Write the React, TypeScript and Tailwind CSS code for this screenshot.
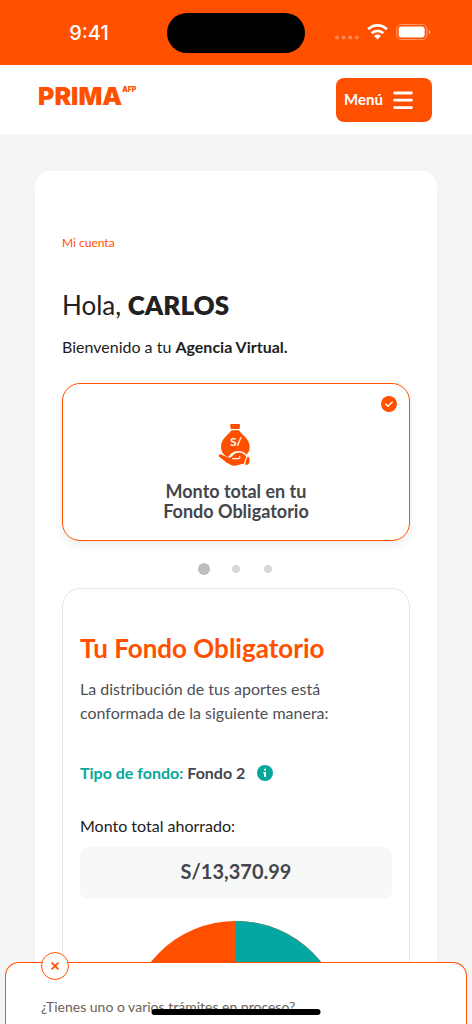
const slides = [
  { id: "obligatorio", label: "Fondo Obligatorio", active: true },
  { id: "voluntario", label: "Fondo Voluntario", active: false },
  { id: "total", label: "Total", active: false },
];

function StatusBar() {
  return (
    <div className="grid h-[65px] grid-cols-[1fr_138px_1fr] items-center bg-[#ff5000] font-['Inter',sans-serif] text-white">
      <span className="pl-[11px] text-center text-xl font-medium">9:41</span>
      <div className="h-10 rounded-full bg-black" />
      <svg className="ml-[29px]" width="98" height="20" viewBox="0 0 98 20" fill="none" aria-hidden="true">
        <g fill="#fff" fillOpacity="0.3">
          <circle cx="3" cy="14.5" r="2.1" />
          <circle cx="9.6" cy="14.5" r="2.1" />
          <circle cx="16.2" cy="14.5" r="2.1" />
          <circle cx="22.8" cy="14.5" r="2.1" />
        </g>
        <g stroke="#fff" strokeWidth="2.8">
          <path d="M34.2 6.300a13.200 13.200 0 0 1 18.600 0" />
          <path d="M37.700 10.200a8.300 8.300 0 0 1 11.600 0" />
        </g>
        <path d="M43.500 16.400l-3.400-3.500a4.900 4.900 0 0 1 6.800 0z" fill="#fff" />
        <rect x="62.700" y="1.500" width="30" height="15" rx="4.600" stroke="#fff" strokeOpacity="0.4" strokeWidth="1.100" />
        <rect x="64.700" y="3.500" width="26" height="11" rx="3" fill="#fff" />
        <path d="M94.700 6.700c2.200.8 2.200 3.800 0 4.600z" fill="#fff" fillOpacity="0.5" />
      </svg>
    </div>
  );
}

function Header() {
  return (
    <header className="flex h-[69px] items-center justify-between bg-white pr-10 pl-[38px]">
      <a href="#inicio" aria-label="Prima AFP" className="flex items-start pb-2 font-['Inter',sans-serif] font-black text-[#ff5000]">
        <span className="text-[25px] leading-6">PRIMA</span>
        <span className="text-[7px] leading-3">AFP</span>
      </a>
      <button type="button" className="flex h-11 w-24 items-center gap-2.5 rounded-lg bg-[#ff5000] pl-2 text-[15px] font-bold text-white">
        Menú
        <svg width="20" height="20" viewBox="0 0 20 20" stroke="#fff" strokeWidth="2.8" strokeLinecap="round" aria-hidden="true">
          <path d="M1.6 3h16.8M1.6 10.2h16.8M1.6 17.6h16.8" />
        </svg>
      </button>
    </header>
  );
}

function MoneyBag() {
  return (
    <svg width="36" height="44" viewBox="-1 0 36 44" aria-hidden="true">
      <path
        fill="#ff5000"
        d="M12.300 1h7.600q1.500 0 1.200 1.500l-.7 3.500h-8.600l-.7-3.500Q10.800 1 12.300 1zM12.400 7.200h7.400c3.200 4.600 10.900 8.700 10.900 16.500 0 3.200-1.200 6-3.200 8-1.700-2.300-4.600-3.600-8-3.600-3.700 0-6.800 1.400-8.800 4.200-.7 1-1.200 1.600-2.200 1.700C4.500 32 2 28.500 2 23.700c0-7.800 7.200-11.900 10.400-16.500z"
      />
      <text x="17" y="23" textAnchor="middle" fontFamily="Lato, sans-serif" fontSize="12" fontWeight="700" fill="#fff">
        S/
      </text>
      <path
        fill="#ff5000"
        d="M-.2 33.600c-.5-1.700.9-2.800 2.400-2.100l6.200 2.800c2 .7 3.700.2 4.900-1.300 2.500-3.200 6.900-4.500 11-2.300 1.500.9 2.500 2 3.100 3.300-1.300 2.100-2 4.300-2.100 6.600-1.500.5-3 .7-4.500.9-2.400.5-3.600 1.500-6.100 1.300C9.900 42.200 5.200 37.700-.2 33.600z"
      />
      <path
        d="M13.600 35.600h5.700c1.600-.1 2.200-1.300 1.200-2.100"
        fill="none"
        stroke="#fff"
        strokeWidth="1.100"
        strokeLinecap="round"
      />
      <path fill="#ff5000" d="M28.500 33.900l1-.2c1.400 1.600 1.400 4.900.2 7-.5.8-1.500 1.200-3.400 1.200.1-3.100.7-5.600 2.200-8z" />
    </svg>
  );
}

function FundPie() {
  return (
    <svg className="mx-auto mt-[22px] size-[218px]" viewBox="0 0 218 218" role="img" aria-label="Distribución del fondo">
      <circle cx="109" cy="109" r="109" fill="#ff5000" />
      <path d="M108.500 0h.5a109 109 0 0 1 0 218h-.5z" fill="#05a7a2" />
    </svg>
  );
}

function Notice() {
  return (
    <aside className="fixed inset-x-[5px] bottom-0 h-[62px] rounded-t-[14px] border border-b-0 border-[#ff5000] bg-white px-[35px] pt-8">
      <button
        type="button"
        aria-label="Cerrar"
        className="absolute -top-[11px] left-[35px] flex size-7 items-center justify-center rounded-full border border-[#ff5000] bg-white"
      >
        <svg width="8" height="8" viewBox="0 0 8 8" stroke="#ff5000" strokeWidth="1.700" aria-hidden="true">
          <path d="M.6.6l6.800 6.800M7.400.6L.6 7.400" />
        </svg>
      </button>
      <p className="text-sm leading-6 text-[#6b6259]">¿Tienes uno o varios trámites en proceso?</p>
      <div className="absolute bottom-[9px] left-1/2 h-[6px] w-[169px] -translate-x-1/2 rounded-full bg-black" />
    </aside>
  );
}

export default function App() {
  return (
    <div className="flex h-screen flex-col bg-[#f5f5f5] font-['Lato',sans-serif] text-[#212121]">
      <StatusBar />
      <Header />
      <main className="min-h-0 flex-1 overflow-y-auto px-[35px] pt-[37px] [scrollbar-width:none]">
        <div className="rounded-2xl bg-white px-[27px] pt-16 pb-24 shadow-[0_0_16px_rgba(0,0,0,0.02)]">
          <a href="#mi-cuenta" className="block text-xs leading-4 text-[#ff5000]">
            Mi cuenta
          </a>
          <h1 className="mt-[38px] text-[26px] leading-8">
            Hola, <strong className="font-extrabold">CARLOS</strong>
          </h1>
          <p className="mt-3.5 text-base leading-6">
            Bienvenido a tu <strong className="font-bold">Agencia Virtual.</strong>
          </p>

          <button
            type="button"
            aria-pressed="true"
            className="relative mt-6 flex h-[158px] w-full flex-col items-center rounded-[18px] border border-[#ff5000] bg-white pt-[39px] shadow-[0_4px_10px_rgba(0,0,0,0.08)]"
          >
            <svg className="absolute top-3 right-3" width="16" height="16" viewBox="0 0 16 16" aria-hidden="true">
              <circle cx="8" cy="8" r="8" fill="#ff5000" />
              <path d="M4.700 8.100l2.200 2.200 4.300-4.400" fill="none" stroke="#fff" strokeWidth="1.400" strokeLinecap="round" />
            </svg>
            <MoneyBag />
            <span className="mt-3.5 text-lg leading-5 font-bold text-[#45464b]">
              Monto total en tu
              <br />
              Fondo Obligatorio
            </span>
          </button>

          <div className="mt-5 flex items-center justify-center gap-4">
            {slides.map((s) => (
              <button key={s.id} type="button" aria-label={s.label} className="flex size-4 items-center justify-center">
                <span className={s.active ? "size-3 rounded-full bg-[#bdbdbd]" : "size-2 rounded-full bg-[#d8d8d8]"} />
              </button>
            ))}
          </div>

          <section className="mt-[11px] rounded-[18px] border border-[#e6e6e6] px-[17px] pt-[43px] pb-8">
            <h2 className="text-[26px] leading-8 font-bold text-[#ff5000]">Tu Fondo Obligatorio</h2>
            <p className="mt-[13px] text-base leading-6 text-[#4f5055]">
              La distribución de tus aportes está conformada de la siguiente manera:
            </p>
            <div className="mt-9 flex items-center gap-3 text-base leading-6 font-bold text-[#45464b]">
              <p>
                <span className="text-[#05a79b]">Tipo de fondo:</span> Fondo 2
              </p>
              <button type="button" aria-label="Información">
                <svg width="16" height="16" viewBox="0 0 16 16" aria-hidden="true">
                  <circle cx="8" cy="8" r="8" fill="#05a79b" />
                  <path d="M7 3.800h2v1.800H7zM6.200 7H9v5H7V8.200h-.8z" fill="#fff" />
                </svg>
              </button>
            </div>
            <p className="mt-[29px] text-base leading-6">Monto total ahorrado:</p>
            <p className="mt-[9px] rounded-lg bg-[#f7f9f9] pt-3 pb-4 text-center text-xl leading-6 font-bold text-[#45464b]">
              S/13,370.99
            </p>
            <FundPie />
          </section>
        </div>
      </main>
      <Notice />
    </div>
  );
}
